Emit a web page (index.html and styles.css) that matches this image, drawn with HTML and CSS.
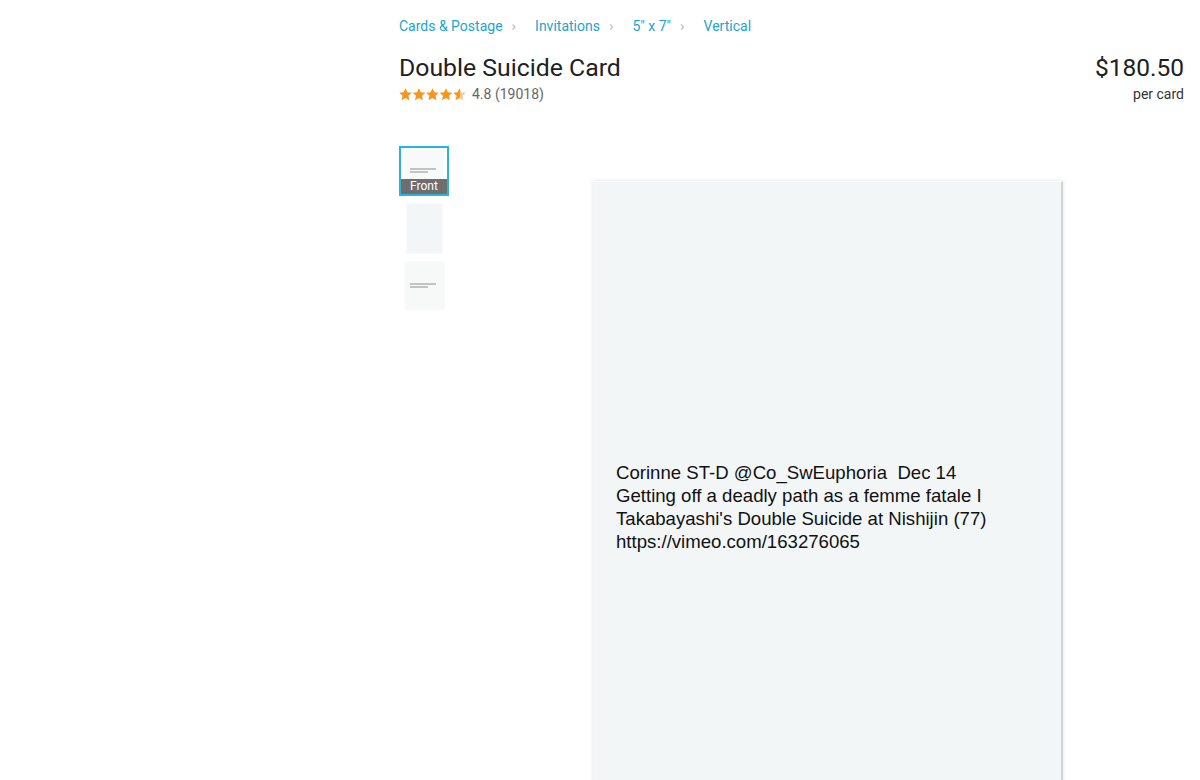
FILE: index.html
```html
<!DOCTYPE html>
<html lang="en">
<head>
    <meta charset="UTF-8">
    <meta name="viewport" content="width=device-width, initial-scale=1.0">
    <title>Double Suicide Card</title>
    <link rel="stylesheet" href="styles.css">
</head>
<body>
    <div class="page">
        <nav class="breadcrumb">
            <a href="#">Cards &amp; Postage</a>
            <span class="sep">&#8250;</span>
            <a href="#">Invitations</a>
            <span class="sep">&#8250;</span>
            <a href="#">5" x 7"</a>
            <span class="sep">&#8250;</span>
            <a href="#">Vertical</a>
        </nav>

        <div class="product-header">
            <div class="product-title">
                <h1>Double Suicide Card</h1>
                <div class="rating">
                    <svg class="stars" width="68" height="13" viewBox="0 0 68 13">
                        <defs>
                            <linearGradient id="halfFill" x1="0" y1="0" x2="1" y2="0">
                                <stop offset="0.55" stop-color="#f7961e"/>
                                <stop offset="0.55" stop-color="#fbc98c"/>
                            </linearGradient>
                        </defs>
                        <g fill="#f7961e">
                            <path d="M6.5 0.3l1.9 4 4.4 0.5-3.3 3 0.95 4.4-3.95-2.3-3.95 2.3 0.95-4.4-3.3-3 4.4-0.5z"/>
                            <path transform="translate(13.5 0)" d="M6.5 0.3l1.9 4 4.4 0.5-3.3 3 0.95 4.4-3.95-2.3-3.95 2.3 0.95-4.4-3.3-3 4.4-0.5z"/>
                            <path transform="translate(27 0)" d="M6.5 0.3l1.9 4 4.4 0.5-3.3 3 0.95 4.4-3.95-2.3-3.95 2.3 0.95-4.4-3.3-3 4.4-0.5z"/>
                            <path transform="translate(40.5 0)" d="M6.5 0.3l1.9 4 4.4 0.5-3.3 3 0.95 4.4-3.95-2.3-3.95 2.3 0.95-4.4-3.3-3 4.4-0.5z"/>
                        </g>
                        <path transform="translate(54 0)" fill="url(#halfFill)" d="M6.5 0.3l1.9 4 4.4 0.5-3.3 3 0.95 4.4-3.950-2.3-3.95 2.3 0.95-4.4-3.3-3 4.4-0.5z"/>
                    </svg>
                    <span class="score">4.8 (19018)</span>
                </div>
            </div>
            <div class="price">
                <div class="amount">$180.50</div>
                <div class="unit">per card</div>
            </div>
        </div>

        <div class="gallery">
            <div class="thumbs">
                <div class="thumb active">
                    <div class="mini-card front">
                        <span class="line"></span>
                        <span class="line short"></span>
                    </div>
                    <div class="thumb-label">Front</div>
                </div>
                <div class="thumb">
                    <div class="mini-card back"></div>
                </div>
                <div class="thumb">
                    <div class="mini-card inside">
                        <span class="line"></span>
                        <span class="line short"></span>
                    </div>
                </div>
            </div>

            <div class="preview">
                <div class="card">
                    <p class="card-text">Corinne ST-D @Co_SwEuphoria&nbsp; Dec 14<br>Getting off a deadly path as a femme fatale I<br>Takabayashi's Double Suicide at Nishijin (77)<br>https://vimeo.com/163276065</p>
                </div>
            </div>
        </div>
    </div>
</body>
</html>
```

FILE: styles.css
```css
/* Page */
body {
    margin: 0;
    font-family: Roboto, "Noto Sans", Arial, sans-serif;
    background: #ffffff;
    color: #212121;
    overflow: hidden;
}

.page {
    width: 785px;
    margin-left: 399px;
    padding-top: 17px;
}

/* Breadcrumb */
.breadcrumb {
    display: flex;
    align-items: center;
    font-size: 14px;
    line-height: 18px;
}

.breadcrumb a {
    color: #1ba4cc;
    text-decoration: none;
}

.breadcrumb .sep {
    color: #b8b8b8;
    font-size: 15px;
    margin: 0 19px 0 9px;
}

/* Header */
.product-header {
    display: flex;
    justify-content: space-between;
    margin-top: 17px;
}

.product-title h1 {
    margin: 0;
    font-size: 24.8px;
    font-weight: 400;
    line-height: 32px;
    color: #212121;
}

.rating {
    display: flex;
    align-items: center;
    font-size: 14px;
    line-height: 18px;
    margin-top: 1px;
}

.rating .stars {
    display: block;
    margin-right: 5px;
}

.rating .score {
    color: #666666;
}

.price {
    text-align: right;
}

.price .amount {
    font-size: 24.5px;
    line-height: 32px;
    color: #212121;
}

.price .unit {
    font-size: 14px;
    line-height: 18px;
    margin-top: 1px;
    color: #333333;
}

/* Gallery */
.gallery {
    display: flex;
    margin-top: 43px;
}

.thumbs {
    display: flex;
    flex-direction: column;
    gap: 7px;
    width: 50px;
}

.thumb {
    position: relative;
    width: 50px;
    height: 50px;
    box-sizing: border-box;
    display: flex;
    align-items: center;
    justify-content: center;
    background: #ffffff;
}

.thumb.active {
    border: 2px solid #2bb4da;
    align-items: flex-start;
}

.thumb-label {
    position: absolute;
    left: 0;
    right: 0;
    bottom: 0;
    height: 15px;
    background: #6e6e6e;
    color: #ffffff;
    font-size: 12px;
    line-height: 15px;
    text-align: center;
}

.mini-card {
    background: #f3f6f7;
    box-shadow: 0 0 1px rgba(0, 0, 0, 0.12);
    display: flex;
    flex-direction: column;
    justify-content: center;
    padding-left: 5px;
    box-sizing: border-box;
    gap: 1px;
}

.mini-card.front {
    width: 38px;
    height: 44px;
    margin-top: 1px;
    background: #f8f9f9;
    padding-bottom: 2px;
}

.mini-card.back {
    width: 35px;
    height: 49px;
}

.mini-card.inside {
    width: 39px;
    height: 47px;
    background: #f7f8f8;
}

.mini-card .line {
    display: block;
    width: 26px;
    height: 2px;
    background: #c2c2c2;
}

.mini-card .line.short {
    width: 18px;
}

.preview {
    flex: 1;
    padding-left: 144px;
    padding-top: 35px;
}

.card {
    width: 470px;
    height: 620px;
    box-sizing: border-box;
    background: #f3f6f7;
    border-top: 1px solid #ffffff;
    border-right: 2px solid #d2d4d5;
    box-shadow: 0 0 4px rgba(0, 0, 0, 0.12);
    padding: 279px 20px 0 23px;
}

.card-text {
    margin: 0;
    font-family: "Liberation Sans", Arial, sans-serif;
    font-size: 18.6px;
    line-height: 23px;
    color: #111111;
}
```
